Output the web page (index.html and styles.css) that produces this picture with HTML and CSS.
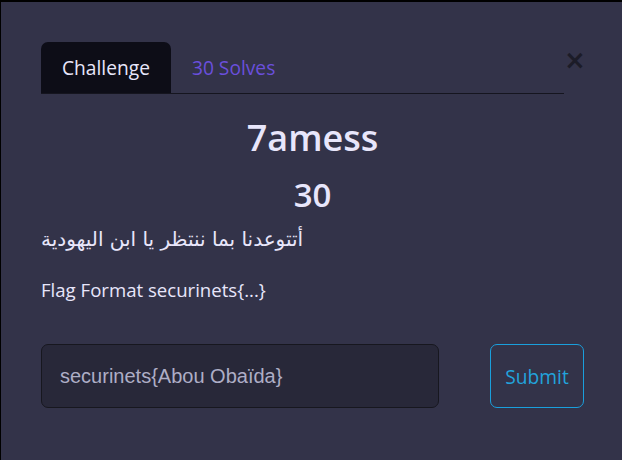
FILE: index.html
```html
<!DOCTYPE html>
<html lang="en">
<head>
<meta charset="utf-8">
<title>7amess</title>
<link rel="stylesheet" href="styles.css">
</head>
<body>
<div class="modal">
  <div class="header">
    <nav class="tabs">
      <span class="tab active">Challenge</span>
      <span class="tab">30 Solves</span>
    </nav>
    <button class="close" type="button">&times;</button>
  </div>
  <div class="content">
    <h2 class="title">7amess</h2>
    <h3 class="value">30</h3>
    <p class="desc arabic" dir="rtl">أتتوعدنا بما ننتظر يا ابن اليهودية</p>
    <p class="desc">Flag Format securinets{...}</p>
    <form class="submit-row">
      <input class="flag-input" type="text" placeholder="securinets{Abou Obaïda}">
      <button class="submit" type="button">Submit</button>
    </form>
  </div>
</div>
</body>
</html>
```
FILE: styles.css
```css
html, body {
  margin: 0;
  padding: 0;
  height: 100%;
}
body {
  background: #333349;
  border-top: 2px solid #000;
  border-left: 1px solid #000;
  box-sizing: border-box;
  font-family: "Open Sans", "DejaVu Sans", sans-serif;
  color: #e8e6fb;
}
.modal {
  padding: 40px 38px 0 40px;
}
.header {
  display: flex;
  align-items: flex-start;
}
.tabs {
  flex: 1;
  display: flex;
  border-bottom: 1px solid #15151f;
}
.tab {
  font-size: 19.2px;
  line-height: 27px;
  padding: 12px 21px;
  border-radius: 7px 7px 0 0;
  color: #6a4fdc;
}
.tab.active {
  background: #0d0d17;
  color: #e8e6fb;
}
.close {
  background: none;
  border: none;
  padding: 0;
  margin: 5px 0 0 0;
  width: 20px;
  font-family: "DejaVu Sans", sans-serif;
  font-size: 26px;
  line-height: 26px;
  font-weight: 700;
  color: #1c1c28;
}
.title {
  margin: 22px 0 0;
  text-align: center;
  font-size: 36px;
  line-height: 44px;
  font-weight: 600;
}
.value {
  margin: 15px 0 0;
  text-align: center;
  font-size: 33px;
  line-height: 40px;
  font-weight: 600;
}
.desc {
  margin: 0;
  font-size: 18.6px;
  line-height: 27px;
}
.arabic {
  direction: rtl;
  display: table;
  margin-top: 9px;
  font-family: "DejaVu Sans", sans-serif;
  font-size: 20px;
  line-height: 30px;
}
.desc + .desc {
  margin-top: 22px;
}
.submit-row {
  display: flex;
  gap: 51px;
  margin-top: 41px;
}
.flag-input {
  width: 398px;
  height: 64px;
  box-sizing: border-box;
  padding: 0 18px;
  background: #282839;
  border: 1px solid #17171f;
  border-radius: 7px;
  font-family: "Liberation Sans", Arial, sans-serif;
  font-size: 20px;
  color: #e8e6fb;
  outline: none;
}
.flag-input::placeholder {
  color: #aeaec6;
}
.submit {
  width: 94px;
  height: 64px;
  background: transparent;
  border: 1px solid #1a9fdc;
  border-radius: 7px;
  font-family: "Open Sans", sans-serif;
  font-size: 19.2px;
  color: #22a3dc;
  padding: 0;
}
```
